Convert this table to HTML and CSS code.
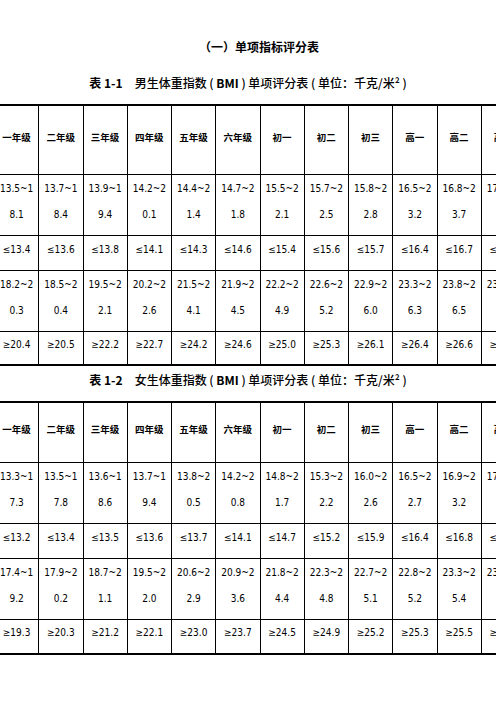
FILE: index.html
```html
<!DOCTYPE html>
<html lang="zh">
<head>
<meta charset="utf-8">
<title>单项指标评分表</title>
<link rel="stylesheet" href="styles.css">
</head>
<body>
<div class="doc">
  <h1 class="title">（一）单项指标评分表</h1>

  <p class="caption"><b>表 1-1</b>　男生体重指数 ( <b>BMI</b> ) 单项评分表 ( 单位：千克/米² )</p>
  <table class="score t1">
    <colgroup><col><col><col><col><col><col><col><col><col><col><col><col></colgroup>
    <tr class="head">
      <th>一年级</th><th>二年级</th><th>三年级</th><th>四年级</th><th>五年级</th><th>六年级</th><th>初一</th><th>初二</th><th>初三</th><th>高一</th><th>高二</th><th>高三</th>
    </tr>
    <tr class="two">
      <td>13.5~1<br>8.1</td><td>13.7~1<br>8.4</td><td>13.9~1<br>9.4</td><td>14.2~2<br>0.1</td><td>14.4~2<br>1.4</td><td>14.7~2<br>1.8</td><td>15.5~2<br>2.1</td><td>15.7~2<br>2.5</td><td>15.8~2<br>2.8</td><td>16.5~2<br>3.2</td><td>16.8~2<br>3.7</td><td>17.3~2<br>3.8</td>
    </tr>
    <tr class="one">
      <td>≤13.4</td><td>≤13.6</td><td>≤13.8</td><td>≤14.1</td><td>≤14.3</td><td>≤14.6</td><td>≤15.4</td><td>≤15.6</td><td>≤15.7</td><td>≤16.4</td><td>≤16.7</td><td>≤17.2</td>
    </tr>
    <tr class="two">
      <td>18.2~2<br>0.3</td><td>18.5~2<br>0.4</td><td>19.5~2<br>2.1</td><td>20.2~2<br>2.6</td><td>21.5~2<br>4.1</td><td>21.9~2<br>4.5</td><td>22.2~2<br>4.9</td><td>22.6~2<br>5.2</td><td>22.9~2<br>6.0</td><td>23.3~2<br>6.3</td><td>23.8~2<br>6.5</td><td>23.9~2<br>7.3</td>
    </tr>
    <tr class="one last">
      <td>≥20.4</td><td>≥20.5</td><td>≥22.2</td><td>≥22.7</td><td>≥24.2</td><td>≥24.6</td><td>≥25.0</td><td>≥25.3</td><td>≥26.1</td><td>≥26.4</td><td>≥26.6</td><td>≥27.4</td>
    </tr>
  </table>

  <p class="caption c2"><b>表 1-2</b>　女生体重指数 ( <b>BMI</b> ) 单项评分表 ( 单位：千克/米² )</p>
  <table class="score t2">
    <colgroup><col><col><col><col><col><col><col><col><col><col><col><col></colgroup>
    <tr class="head">
      <th>一年级</th><th>二年级</th><th>三年级</th><th>四年级</th><th>五年级</th><th>六年级</th><th>初一</th><th>初二</th><th>初三</th><th>高一</th><th>高二</th><th>高三</th>
    </tr>
    <tr class="two">
      <td>13.3~1<br>7.3</td><td>13.5~1<br>7.8</td><td>13.6~1<br>8.6</td><td>13.7~1<br>9.4</td><td>13.8~2<br>0.5</td><td>14.2~2<br>0.8</td><td>14.8~2<br>1.7</td><td>15.3~2<br>2.2</td><td>16.0~2<br>2.6</td><td>16.5~2<br>2.7</td><td>16.9~2<br>3.2</td><td>17.1~2<br>3.3</td>
    </tr>
    <tr class="one">
      <td>≤13.2</td><td>≤13.4</td><td>≤13.5</td><td>≤13.6</td><td>≤13.7</td><td>≤14.1</td><td>≤14.7</td><td>≤15.2</td><td>≤15.9</td><td>≤16.4</td><td>≤16.8</td><td>≤17.0</td>
    </tr>
    <tr class="two">
      <td>17.4~1<br>9.2</td><td>17.9~2<br>0.2</td><td>18.7~2<br>1.1</td><td>19.5~2<br>2.0</td><td>20.6~2<br>2.9</td><td>20.9~2<br>3.6</td><td>21.8~2<br>4.4</td><td>22.3~2<br>4.8</td><td>22.7~2<br>5.1</td><td>22.8~2<br>5.2</td><td>23.3~2<br>5.4</td><td>23.4~2<br>5.7</td>
    </tr>
    <tr class="one last">
      <td>≥19.3</td><td>≥20.3</td><td>≥21.2</td><td>≥22.1</td><td>≥23.0</td><td>≥23.7</td><td>≥24.5</td><td>≥24.9</td><td>≥25.2</td><td>≥25.3</td><td>≥25.5</td><td>≥25.8</td>
    </tr>
  </table>
</div>
</body>
</html>
```

FILE: styles.css
```css
html, body {
  margin: 0;
  padding: 0;
  background: #fff;
  overflow: hidden;
}
body {
  width: 496px;
  height: 702px;
  color: #000;
  font-family: "Noto Sans CJK SC", "Noto Sans", sans-serif;
}
.doc {
  padding-top: 39px;
}
.title {
  margin: 0;
  padding-left: 22px;
  text-align: center;
  font-size: 12px;
  line-height: 16px;
  font-weight: 700;
}
.caption {
  margin: 20px 0 0;
  text-align: center;
  font-size: 12px;
  line-height: 16px;
  font-weight: 500;
  white-space: nowrap;
}
.caption b {
  font-weight: 700;
}
.caption.c2 {
  margin-top: 6px;
}
.score {
  margin: 13px 0 0 -6px;
  border-collapse: collapse;
  table-layout: fixed;
  width: 531px;
  border-top: 2px solid #000;
  border-bottom: 2px solid #000;
}
.score col {
  width: 44.25px;
}
.score th,
.score td {
  border-left: 1px solid #000;
  border-right: 1px solid #000;
  border-top: 1px solid #000;
  padding: 0 0 6px;
  text-align: center;
  vertical-align: middle;
  white-space: nowrap;
  overflow: hidden;
}
.score th {
  font-size: 9.5px;
  font-weight: 700;
  line-height: 16px;
}
.score td {
  font-family: "Liberation Sans Narrow", "DejaVu Sans Condensed", "Liberation Sans", sans-serif;
  font-size: 10px;
  line-height: 26px;
}
.t1 .head { height: 69px; }
.t2 .head { height: 61px; }
.score .two { height: 61px; }
.score .one { height: 35px; }
.t1 .last { height: 33px; }
.t2 .last { height: 34px; }
```
